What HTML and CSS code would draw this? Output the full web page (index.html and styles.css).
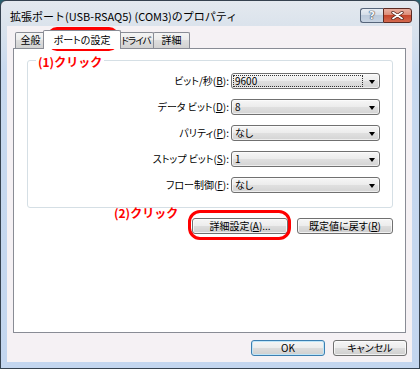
FILE: index.html
```html
<!DOCTYPE html>
<html lang="ja">
<head>
<meta charset="utf-8">
<title>プロパティ</title>
<link rel="stylesheet" href="styles.css">
</head>
<body>
<div class="window">
  <div class="titlebar">
    <span class="title">拡張ポート(USB-RSAQ5) (COM3)のプロパティ</span>
    <div class="caption-buttons">
      <span class="cap help">?</span>
      <span class="cap close">
        <svg width="13" height="9" viewBox="0 0 13 9"><path d="M2 1.5 L11 7.5 M11 1.5 L2 7.5" stroke="#4a1a12" stroke-width="3.2" stroke-linecap="round"/><path d="M2 1.5 L11 7.5 M11 1.5 L2 7.5" stroke="#fff" stroke-width="1.8" stroke-linecap="round"/></svg>
      </span>
    </div>
  </div>
  <div class="client">
    <div class="tabs">
      <div class="tab t1">全般</div>
      <div class="tab active">ポートの設定</div>
      <div class="tab t3">ドライバ</div>
      <div class="tab t4">詳細</div>
    </div>
    <div class="panel">
      <div class="group">
        <span class="lbl">ビット/秒(<u>B</u>):</span>
        <div class="combo"><span class="val focus">9600</span><i class="arrow"></i></div>
        <span class="lbl">データ ビット(<u>D</u>):</span>
        <div class="combo"><span class="val">8</span><i class="arrow"></i></div>
        <span class="lbl">パリティ(<u>P</u>):</span>
        <div class="combo"><span class="val">なし</span><i class="arrow"></i></div>
        <span class="lbl">ストップ ビット(<u>S</u>):</span>
        <div class="combo"><span class="val">1</span><i class="arrow"></i></div>
        <span class="lbl">フロー制御(<u>F</u>):</span>
        <div class="combo"><span class="val">なし</span><i class="arrow"></i></div>
      </div>
      <div class="actions">
        <span class="btn wide">詳細設定(<u>A</u>)...</span>
        <span class="btn wide">既定値に戻す(<u>R</u>)</span>
      </div>
    </div>
    <div class="footer">
      <span class="btn std default">OK</span>
      <span class="btn std">キャンセル</span>
    </div>
  </div>
  <span class="note note1">(1)クリック</span>
  <span class="note note2">(2)クリック</span>
  <div class="ring ring1"></div>
  <div class="ring ring2"></div>
</div>
</body>
</html>
```
FILE: styles.css
```css
* { box-sizing: border-box; }
html, body { margin: 0; padding: 0; }
body {
  width: 420px;
  height: 369px;
  overflow: hidden;
  background: #2a5f6d;
  font-family: "Noto Sans CJK JP", "Noto Sans", sans-serif;
  color: #000;
}
.window {
  position: relative;
  width: 420px;
  height: 369px;
  border: 1px solid #36424f;
  border-radius: 6px 6px 0 0;
  background: linear-gradient(#e4e9ef 0, #dbe3ec 24px, #c8d9ef 70px, #c3d6ef 100%);
  display: flex;
  flex-direction: column;
  padding: 0 7px 6px 6px;
}
.titlebar {
  height: 25px;
  display: flex;
  justify-content: space-between;
  align-items: flex-start;
}
.title {
  padding: 8px 0 0 3px;
  font-size: 11px;
  line-height: 14px;
  color: #000;
}
.caption-buttons {
  display: flex;
  margin-top: 7px;
}
.cap {
  height: 15px;
  display: flex;
  align-items: center;
  justify-content: center;
  border: 1px solid #56657a;
}
.help {
  width: 23px;
  border-radius: 3px 0 0 3px;
  border-right: none;
  background: linear-gradient(#e9eef4 0, #d2dbe6 50%, #bccadb 50%, #c8d4e2 100%);
  font: bold 11px/13px "DejaVu Sans", sans-serif;
  color: #f4f6f9;
  text-shadow: 0 0 1px #3b4756, 0 0 1px #3b4756, 0 0 1px #3b4756;
}
.close {
  width: 29px;
  border-radius: 0 3px 3px 0;
  border-color: #5c2a22;
  background: linear-gradient(#eab0a1 0, #db8873 50%, #c6462c 50%, #d46a4f 100%);
}
.client {
  flex: 1;
  background: #f5f1f4;
  display: flex;
  flex-direction: column;
  padding: 4px 5px 6px 6px;
}
.tabs {
  height: 18px;
  display: flex;
  align-items: flex-start;
  padding-left: 2px;
  position: relative;
  z-index: 1;
}
.tab {
  height: 16px;
  margin-top: 2px;
  border: 1px solid #898c95;
  border-bottom: none;
  border-radius: 2px 2px 0 0;
  background: linear-gradient(#f4f4f4 0, #ebebeb 50%, #dedede 50%, #d2d2d2 100%);
  font-size: 10px;
  line-height: 14px;
  font-feature-settings: "palt";
  text-align: center;
  white-space: nowrap;
  display: flex;
  justify-content: center;
}
.t1 { width: 31px; }
.t3 { width: 36px; font-size: 9.5px; letter-spacing: -0.9px; }
.t4 { width: 37px; margin-left: -1px; }
.tab.active {
  width: 78px;
  height: 19px;
  margin: 0 -3px 0 -3px;
  background: #fff;
  position: relative;
  z-index: 2;
  line-height: 17px;
}
.panel {
  flex: 1;
  margin-right: 1px;
  border: 1px solid #898c95;
  background: #fff;
  padding: 11px 12px 0 13px;
  display: flex;
  flex-direction: column;
}
.group {
  border: 1px solid #d5dfe5;
  border-radius: 3px;
  padding: 12px 12px 14px 12px;
  display: grid;
  grid-template-columns: 1fr 149px;
  grid-auto-rows: 16px;
  column-gap: 2px;
  row-gap: 10px;
}
.lbl {
  font-size: 10px;
  line-height: 16px;
  text-align: right;
  font-feature-settings: "palt";
  white-space: nowrap;
}
.combo {
  position: relative;
  border: 1px solid #707070;
  border-radius: 3px;
  background: linear-gradient(#f6f6f6 0, #ececec 50%, #e0e0e0 50%, #d4d4d4 100%);
  box-shadow: inset 0 0 0 1px rgba(255,255,255,0.6);
  display: flex;
  align-items: center;
  padding-left: 2px;
}
.val {
  font-size: 10px;
  line-height: 12px;
  padding-left: 1px;
  font-feature-settings: "palt";
}
.val.focus {
  width: 130px;
  outline: 1px dotted #333;
  outline-offset: -1px;
  padding-left: 2px;
  margin-left: -1px;
}
.arrow {
  position: absolute;
  right: 4px;
  top: 6px;
  width: 0;
  height: 0;
  border-left: 3.5px solid transparent;
  border-right: 3.5px solid transparent;
  border-top: 4px solid #000;
}
.actions {
  display: flex;
  justify-content: flex-end;
  gap: 9px;
  margin-top: 10px;
}
.btn {
  height: 16px;
  border: 1px solid #707070;
  border-radius: 3px;
  background: linear-gradient(#f6f6f6 0, #ececec 50%, #dddddd 50%, #cfcfcf 100%);
  box-shadow: inset 0 0 0 1px rgba(255,255,255,0.7);
  font-size: 10px;
  line-height: 14px;
  text-align: center;
  font-feature-settings: "palt";
  white-space: nowrap;
}
.wide { width: 96px; }
.std { width: 74px; }
.footer {
  display: flex;
  justify-content: flex-end;
  gap: 8px;
  margin-top: 7px;
  padding-right: 0;
}
.btn.default {
  border-color: #3c7fb1;
  box-shadow: inset 0 0 0 1px #bfe5f8;
}
.note {
  position: absolute;
  font-size: 12px;
  font-weight: bold;
  line-height: 14px;
  color: #f00;
  white-space: nowrap;
}
.note1 {
  left: 35px;
  top: 54px;
  padding: 0 2px;
  background: #fff;
}
.note2 {
  left: 113px;
  top: 205px;
}
.ring {
  position: absolute;
  border: 3px solid #f00;
}
.ring1 {
  left: 46px;
  top: 26px;
  width: 72px;
  height: 24px;
  border-radius: 10px;
}
.ring2 {
  left: 187px;
  top: 209px;
  width: 103px;
  height: 30px;
  border-radius: 12px;
}
```
